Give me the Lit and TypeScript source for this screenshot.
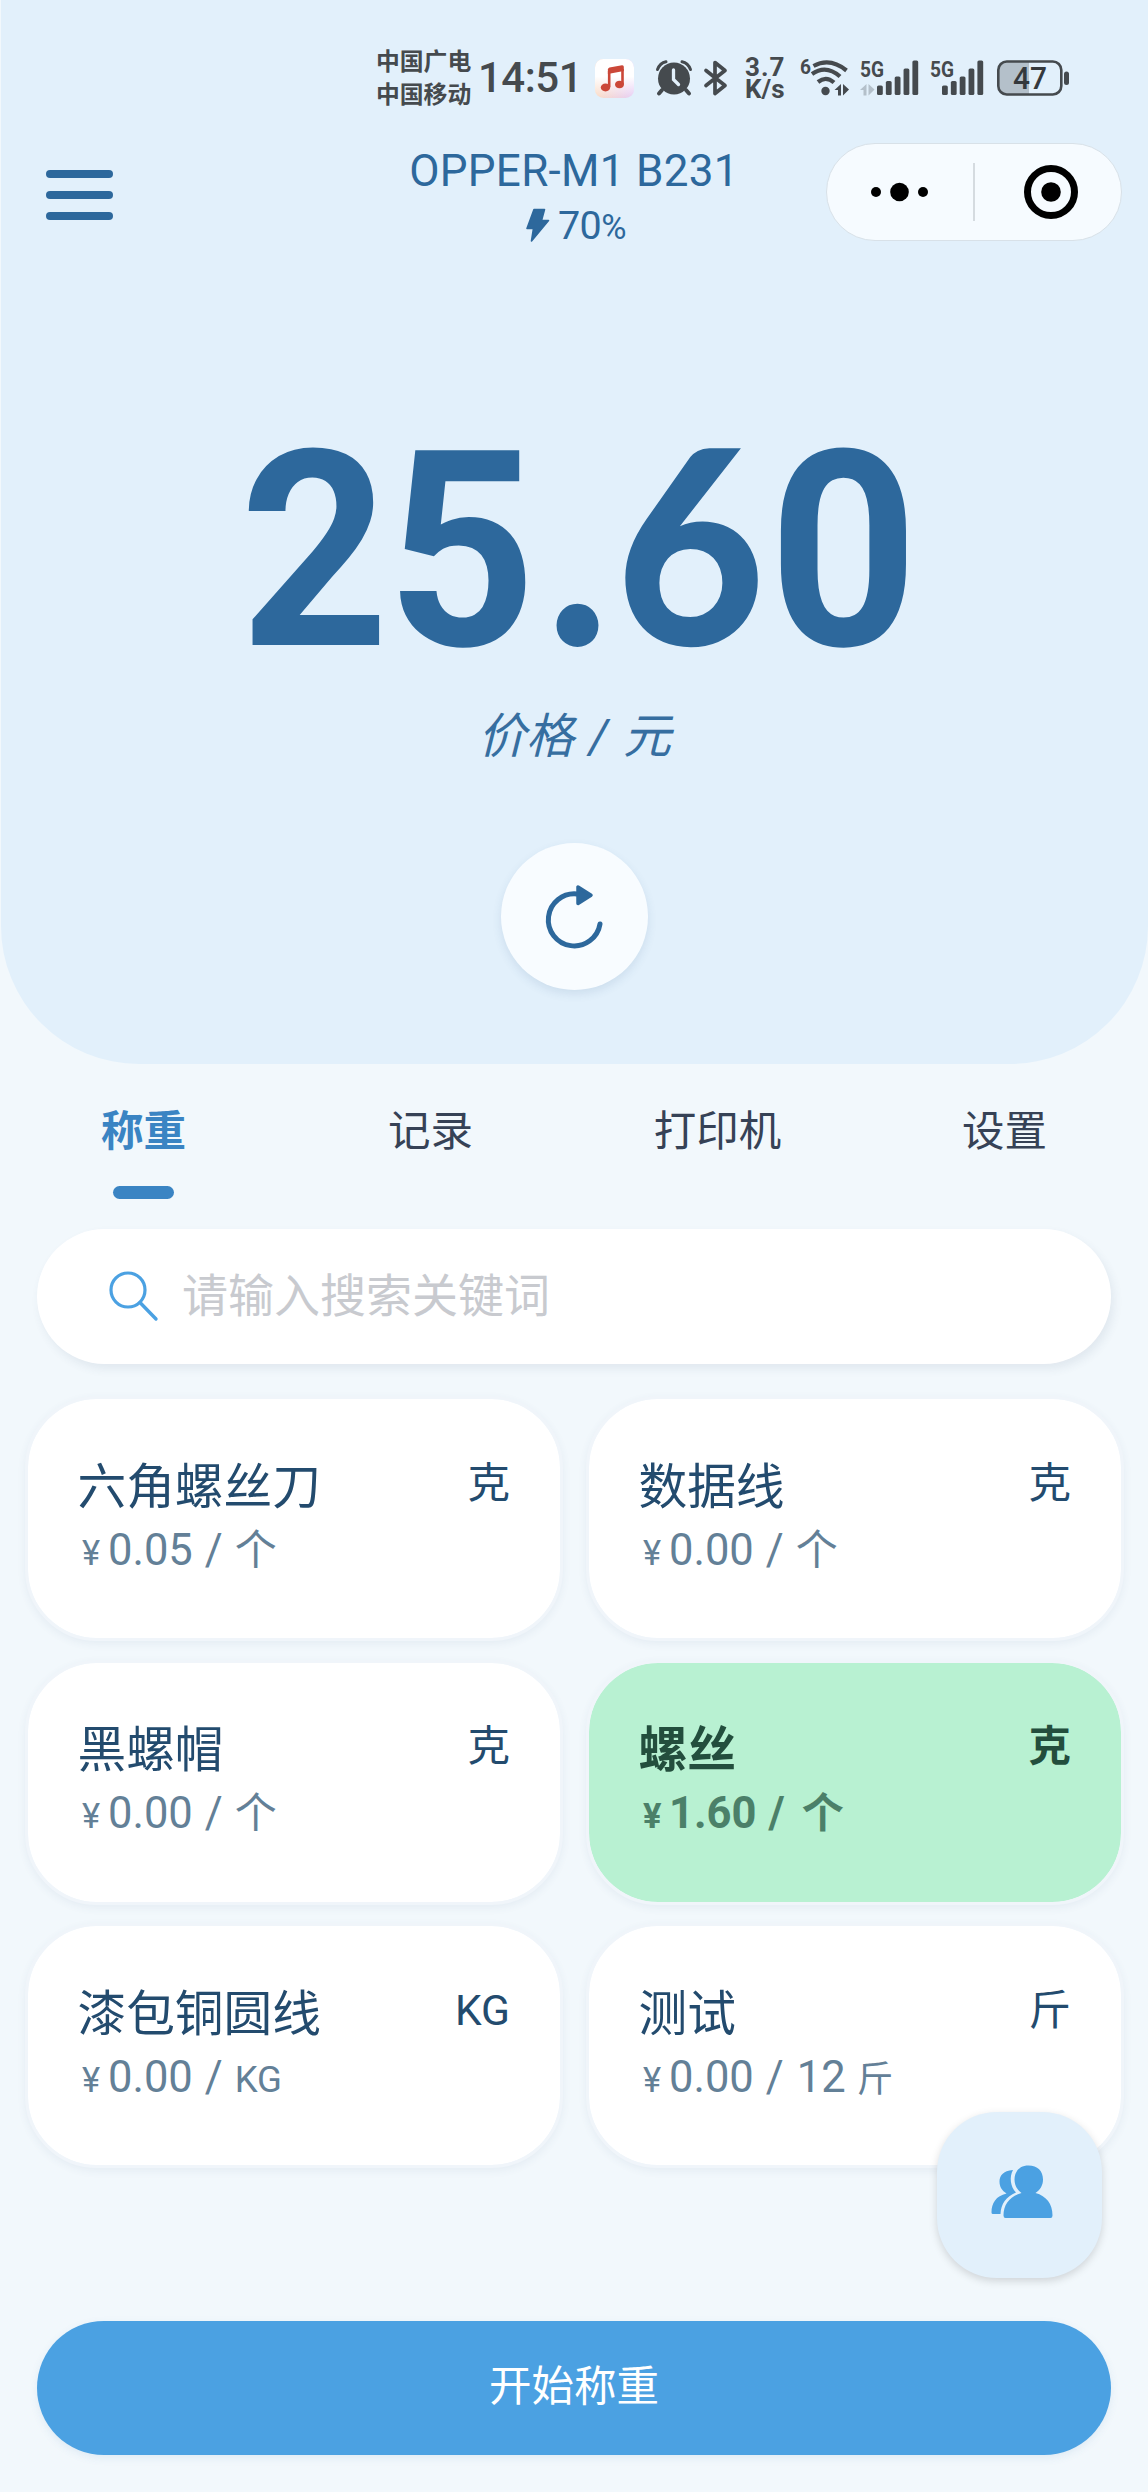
import { LitElement, html, css, svg } from "lit";
import { customElement, property, state } from "lit/decorators.js";
import { classMap } from "lit/directives/class-map.js";

interface Product {
  name: string;
  unit: string;
  price: string;
  per: string;
  count?: string;
  small?: boolean;
}

const PRODUCTS: Product[] = [
  { name: "六角螺丝刀", unit: "克", price: "0.05", per: "个" },
  { name: "数据线", unit: "克", price: "0.00", per: "个" },
  { name: "黑螺帽", unit: "克", price: "0.00", per: "个" },
  { name: "螺丝", unit: "克", price: "1.60", per: "个" },
  { name: "漆包铜圆线", unit: "KG", price: "0.00", per: "KG", small: true },
  { name: "测试", unit: "斤", price: "0.00", count: "12", per: "斤", small: true },
];

const TABS = ["称重", "记录", "打印机", "设置"];

@customElement("status-bar")
class StatusBar extends LitElement {
  static styles = css`
    :host {
      display: flex;
      height: 66px;
      padding-left: 375px;
      align-items: center;
      color: #454a4e;
      font-family: Roboto, "Noto Sans CJK SC", sans-serif;
    }
    svg {
      display: block;
      flex: none;
      overflow: visible;
    }
    .carriers {
      width: 102px;
      padding-bottom: 4px;
      font: 700 23.8px/33px "Noto Sans CJK SC", sans-serif;
      white-space: nowrap;
    }
    .time {
      width: 117px;
      font-size: 42px;
      line-height: 66px;
      font-weight: 500;
      letter-spacing: -0.5px;
      white-space: nowrap;
    }
    .music {
      margin-right: 22px;
    }
    .alarm {
      margin-right: 12px;
    }
    .bt {
      margin-right: 17px;
    }
    .speed {
      width: 55px;
      font-size: 26px;
      line-height: 22px;
      font-weight: 700;
      white-space: nowrap;
    }
    .rate {
      letter-spacing: 1px;
    }
    .wifi {
      margin-right: 11px;
    }
    .cell {
      margin-right: 10px;
    }
    .cell.last {
      margin-right: 12px;
    }
    text {
      font-family: Roboto, sans-serif;
      font-weight: 700;
    }
    .level {
      font-weight: 500;
    }
  `;

  private cell(x0: number, data: boolean, last: boolean) {
    const tops = [27.5, 23, 18.5, 10.5, 2.5];
    return html`<svg class="cell ${last ? "last" : ""}" width=${x0 + 43} height="40" viewBox="0 0 ${x0 + 43} 40">
      <text x="0" y="19" font-size="22.5" textLength="24" lengthAdjust="spacingAndGlyphs" fill="#454a4e">5G</text>
      ${data
        ? svg`<path d="M6.500 26v11.500h-3V32H0zM8.500 26v11.500l6-6z" fill="#b4c0ca"/>`
        : ""}
      ${tops.map(
        (t, i) => svg`<rect x=${x0 + i * 8.85} y=${t} width="5.8" height=${37 - t} rx="1.6" fill="#454a4e"/>`,
      )}
    </svg>`;
  }

  render() {
    return html`
      <div class="carriers"><div>中国广电</div><div>中国移动</div></div>
      <div class="time">14:51</div>
      <svg class="music" width="39" height="39" viewBox="0 0 39 39">
        <defs>
          <linearGradient id="g" x1="0" y1="1" x2="1" y2="0.9">
            <stop offset="0" stop-color="#fbdcc4" />
            <stop offset="1" stop-color="#e6cdf5" />
          </linearGradient>
          <linearGradient id="w" x1="0" y1="0" x2="0" y2="1">
            <stop offset="0.45" stop-color="#fff" />
            <stop offset="1" stop-color="#fff" stop-opacity="0" />
          </linearGradient>
        </defs>
        <rect width="39" height="39" rx="8.500" fill="url(#g)" />
        <rect width="39" height="39" rx="8.500" fill="url(#w)" />
        <path d="M27.500 10V25M14.200 12V28" fill="none" stroke="#cb4738" stroke-width="2.600" />
        <path d="M12.900 10.500Q13 9 14.500 8.500L27 6.200Q28.800 6 28.800 7.800V12L12.900 15z" fill="#cb4738" />
        <ellipse cx="10.500" cy="28.500" rx="4.700" ry="3.900" fill="#cb4738" />
        <ellipse cx="24.500" cy="25.500" rx="4.500" ry="3.800" fill="#cb4738" />
      </svg>
      <svg class="alarm" width="36" height="36" viewBox="0 0 36 36">
        <circle cx="18" cy="18.500" r="16" fill="#454a4e" />
        <path d="M1.500 9.500Q4 3 10 1.800M34.500 9.500Q32 3 26 1.800" fill="none" stroke="#454a4e" stroke-width="3" stroke-linecap="round" />
        <path d="M6 30l-3 3.500M30 30l3 3.500" stroke="#454a4e" stroke-width="4" stroke-linecap="round" />
        <path d="M17.500 10v9.500l5 5" fill="none" stroke="#e2f0fb" stroke-width="3.300" stroke-linecap="round" />
      </svg>
      <svg class="bt" width="24" height="36" viewBox="0 0 24 36">
        <path d="M2 10.500L21 25.500 11 33.500V2.500L21 10.500 2 25.500" fill="none" stroke="#454a4e" stroke-width="3.700" stroke-linejoin="round" stroke-linecap="round" />
      </svg>
      <div class="speed"><div class="rate">3.7</div><div>K/s</div></div>
      <svg class="wifi" width="49" height="40" viewBox="0 0 49 40">
        <text x="0" y="16" font-size="21" textLength="11" lengthAdjust="spacingAndGlyphs" fill="#454a4e">6</text>
        <g fill="none" stroke="#454a4e" stroke-width="4.200">
          <path d="M13.500 8Q30 -1 46.500 12.500" />
          <path d="M12 16Q26 6 40 18.500" />
          <path d="M18 24Q26 17.500 34 24.500" />
        </g>
        <circle cx="25.500" cy="33" r="4.200" fill="#454a4e" />
        <path d="M41 26v11.500h-3V32h-3.500zM43 26v11.500l6-6z" fill="#454a4e" />
      </svg>
      ${this.cell(17, true, false)} ${this.cell(12, false, true)}
      <svg width="73" height="36" viewBox="0 0 73 36">
        <path d="M9.500 1.500H32V34.500H9.500a8 8 0 0 1-8-8V9.500a8 8 0 0 1 8-8z" fill="#b4c0ca" />
        <rect x="1.300" y="1.500" width="63" height="33" rx="8.500" fill="none" stroke="#454a4e" stroke-width="2.600" />
        <rect x="67" y="11.500" width="5" height="13.500" rx="2.500" fill="#454a4e" />
        <text class="level" x="16" y="29" font-size="32" textLength="34" lengthAdjust="spacingAndGlyphs" fill="#35393d">47</text>
      </svg>
    `;
  }
}

@customElement("product-card")
class ProductCard extends LitElement {
  @property({ attribute: false }) item!: Product;
  @property({ type: Boolean, reflect: true }) selected = false;

  static styles = css`
    :host {
      display: flex;
      justify-content: space-between;
      align-items: flex-start;
      box-sizing: border-box;
      height: 245px;
      padding: 52.500px 50px 0 49.500px;
      border: 3px solid #f0f5fa;
      border-radius: 72px;
      background: #fff;
      background-clip: padding-box;
      box-shadow: 0 3px 8px rgba(60, 90, 130, 0.07);
      font-family: Roboto, "Noto Sans CJK SC", sans-serif;
      color: #234b6e;
      white-space: nowrap;
    }
    :host([selected]) {
      background-color: #b8f1d2;
      color: #234e3d;
      font-weight: 700;
    }
    .name {
      font-size: 48.700px;
      line-height: 72px;
    }
    .price {
      display: flex;
      align-items: baseline;
      height: 54px;
      line-height: 54px;
      padding-left: 4.500px;
      font-size: 43.500px;
      color: #638097;
    }
    :host([selected]) .price {
      color: #4b8069;
    }
    .yen {
      width: 26px;
      font-size: 34.500px;
    }
    .slash {
      margin: 0 12px 0 12px;
    }
    :host([selected]) .slash {
      margin-right: 17px;
    }
    .count {
      margin: 0 11px 0 1px;
    }
    .per {
      font-size: 42px;
    }
    .per.small {
      font-size: 36.500px;
    }
    .unit {
      font-size: 42.500px;
      line-height: 64px;
    }
  `;

  render() {
    const p = this.item;
    return html`
      <div>
        <div class="name">${p.name}</div>
        <div class="price">
          <span class="yen">¥</span><span>${p.price}</span><span class="slash">/</span>
          ${p.count ? html`<span class="count">${p.count}</span>` : ""}
          <span class=${classMap({ per: true, small: !!p.small })}>${p.per}</span>
        </div>
      </div>
      <div class="unit">${p.unit}</div>
    `;
  }
}

@customElement("app-root")
class AppRoot extends LitElement {
  @state() private tab = 0;
  @state() private picked = 3;

  static styles = css`
    :host {
      display: block;
      box-sizing: border-box;
      position: relative;
      height: 2492px;
      overflow: hidden;
      background: #f2f8fc;
      font-family: Roboto, "Noto Sans CJK SC", sans-serif;
      color: #2d689c;
    }
    svg {
      display: block;
    }
    .hero {
      display: flex;
      flex-direction: column;
      box-sizing: border-box;
      height: 1064px;
      margin-left: 1px;
      padding-top: 45px;
      border-radius: 0 0 138px 138px;
      background: #e2f0fb;
    }
    .nav {
      display: grid;
      grid-template-columns: 1fr auto 1fr;
      height: 98px;
      margin: 32px 26px 0 45px;
    }
    .menu {
      display: flex;
      flex-direction: column;
      gap: 12.500px;
      padding-top: 27px;
    }
    .bar {
      width: 67px;
      height: 8.400px;
      border-radius: 4px;
      background: #2d689c;
    }
    .device {
      margin-left: -20px;
      padding-top: 1px;
      text-align: center;
      white-space: nowrap;
    }
    .title {
      height: 54px;
      line-height: 54px;
      font-size: 44px;
      letter-spacing: 0.300px;
    }
    .battery {
      display: flex;
      justify-content: center;
      align-items: baseline;
      height: 54px;
      line-height: 56px;
      padding-left: 4px;
      font-size: 39.500px;
      letter-spacing: -0.500px;
    }
    .bolt {
      margin-right: 8px;
      align-self: center;
    }
    .pct {
      font-size: 34.500px;
    }
    .capsule {
      display: flex;
      justify-self: end;
      align-items: center;
      box-sizing: border-box;
      width: 296px;
      height: 98px;
      border: 1.500px solid #d8e1e8;
      border-radius: 49px;
      background: #f6fbff;
    }
    .more,
    .close {
      display: flex;
      justify-content: center;
    }
    .close {
      flex: 1;
      padding-left: 5px;
    }
    .more {
      box-sizing: border-box;
      flex: none;
      width: 148px;
      border-right: 2px solid #d5dbe0;
      height: 58px;
      align-items: center;
    }
    .value {
      margin: 140px 0 0 3px;
      height: 321px;
      line-height: 320px;
      text-align: center;
      white-space: nowrap;
      font-family: Lato, sans-serif;
      font-weight: 900;
      font-size: 271px;
    }
    .digit {
      display: inline-block;
      width: 151px;
      line-height: 1;
      text-align: center;
      font-family: Roboto, sans-serif;
      font-weight: 700;
      font-size: 274px;
      letter-spacing: -6px;
      transform: scaleX(0.95);
    }
    .digit.five {
      margin: 0 5px 0 -4px;
    }
    .digit.round {
      margin: 0 2px 0 -4px;
      font-family: Lato, sans-serif;
      font-weight: 900;
      font-size: 271px;
    }
    .digit.point {
      width: 77px;
      font-family: Lato, sans-serif;
      font-weight: 900;
      font-size: 271px;
      letter-spacing: 0;
    }
    .label {
      height: 72px;
      line-height: 70px;
      text-align: center;
      font-size: 48px;
      font-style: italic;
      word-spacing: 3px;
      opacity: 0.95;
    }
    .refresh {
      display: flex;
      align-self: center;
      align-items: center;
      justify-content: center;
      width: 147px;
      height: 147px;
      margin-top: 69px;
      border-radius: 50%;
      background: #f8fcff;
      box-shadow: 0 4px 10px rgba(50, 90, 140, 0.12);
    }
    .tabs {
      display: grid;
      grid-template-columns: repeat(4, 1fr);
      height: 165px;
    }
    .tab {
      display: flex;
      flex-direction: column;
      align-items: center;
      padding-top: 35px;
      font-size: 42.500px;
      line-height: 66px;
      color: #364256;
    }
    .tab.active {
      font-weight: 700;
      color: #3a84c3;
    }
    .tab.active::after {
      content: "";
      width: 61px;
      height: 13px;
      margin-top: 21px;
      border-radius: 6.500px;
      background: #3a84c3;
    }
    .search {
      display: flex;
      align-items: center;
      box-sizing: border-box;
      height: 135px;
      margin: 0 37px;
      padding-left: 72px;
      border-radius: 68px;
      background: #fff;
      box-shadow: 3px 5px 10px rgba(60, 80, 110, 0.09);
      font-size: 46px;
      color: #c8cacf;
    }
    .search svg {
      margin-right: 23px;
    }
    .hint {
      padding-bottom: 9px;
    }
    .grid {
      display: grid;
      grid-template-columns: 1fr 1fr;
      gap: 18.500px 23px;
      margin: 32px 24px 0 25px;
    }
    .start {
      display: flex;
      align-items: center;
      justify-content: center;
      box-sizing: border-box;
      height: 134px;
      margin: 153px 37px 0;
      padding-bottom: 12px;
      border-radius: 67px;
      background: #4ba1e2;
      box-shadow: 0 3px 8px rgba(60, 120, 180, 0.1);
      color: #fff;
      font-size: 42.500px;
    }
    .fab {
      position: absolute;
      right: 46px;
      top: 2112px;
      display: flex;
      align-items: center;
      justify-content: center;
      box-sizing: border-box;
      width: 165px;
      height: 166px;
      padding: 0 0 7px 4px;
      border-radius: 60px;
      background: #e2f0fb;
      box-shadow: 0 3px 8px rgba(0, 0, 0, 0.15);
    }
  `;

  private digit(ch: string) {
    return html`<span class=${classMap({ digit: true, five: ch === "5", round: ch === "6", point: ch === "." })}>${ch}</span>`;
  }

  render() {
    return html`
      <section class="hero">
        <status-bar></status-bar>
        <div class="nav">
          <div class="menu"><div class="bar"></div><div class="bar"></div><div class="bar"></div></div>
          <div class="device">
            <div class="title">OPPER-M1 B231</div>
            <div class="battery">
              <svg class="bolt" width="24" height="34" viewBox="0 0 24 34">
                <path d="M8 1.500H18.500L15.500 12.500H22.500L5.500 33 7.500 20.500H1z" fill="#2d689c" stroke="#2d689c" stroke-width="1.600" stroke-linejoin="round" />
              </svg>
              <span>70</span><span class="pct">%</span>
            </div>
          </div>
          <div class="capsule">
            <div class="more">
              <svg width="58" height="20" viewBox="0 0 58 20">
                <circle cx="5" cy="10" r="5" /><circle cx="28.500" cy="10" r="9.300" /><circle cx="52" cy="10" r="5" />
              </svg>
            </div>
            <div class="close">
              <svg width="54" height="54" viewBox="0 0 54 54">
                <circle cx="27" cy="27" r="23.500" fill="none" stroke="#000" stroke-width="7" />
                <circle cx="27" cy="27" r="9.800" />
              </svg>
            </div>
          </div>
        </div>
        <div class="value">${[..."25.60"].map((c) => this.digit(c))}</div>
        <div class="label">价格 / 元</div>
        <div class="refresh">
          <svg width="70" height="70" viewBox="-34 -36 70 70">
            <path d="M3 -24A26 26 0 1 0 26 6" fill="none" stroke="#2d689c" stroke-width="5" stroke-linecap="round" />
            <path d="M4 -31V-14.500L17 -22.700z" fill="#2d689c" stroke="#2d689c" stroke-width="3.500" stroke-linejoin="round" />
          </svg>
        </div>
      </section>
      <nav class="tabs">
        ${TABS.map(
          (t, i) => html`<div class=${classMap({ tab: true, active: i === this.tab })} @click=${() => (this.tab = i)}>${t}</div>`,
        )}
      </nav>
      <div class="search">
        <svg width="50" height="54" viewBox="0 0 50 54">
          <circle cx="19" cy="20" r="17" fill="none" stroke="#4ba1e2" stroke-width="3.200" />
          <path d="M31 32.500L47 49" stroke="#4ba1e2" stroke-width="3.400" stroke-linecap="round" />
        </svg>
        <span class="hint">请输入搜索关键词</span>
      </div>
      <div class="grid">
        ${PRODUCTS.map(
          (p, i) => html`<product-card .item=${p} ?selected=${i === this.picked} @click=${() => (this.picked = i)}></product-card>`,
        )}
      </div>
      <div class="start">开始称重</div>
      <div class="fab">
        <svg width="62" height="54" viewBox="0 0 62 54">
          <path d="M22 5C12 5.500 8.500 11 8.500 16.500 8.500 22 11 25.500 15.500 28.500 5 31 0.500 38 0.500 47.500Q0.500 49 2 49H9.500C10 39 15 31.500 25 27.500 19.500 22 18 12 22 5z" fill="#4ba1e2" />
          <path d="M37.500 0.500C46.500 0.500 52 6 52 14.500 52 20.500 49 25 44.500 28 55.500 31 61.500 39 61.500 50.500Q61.500 53 59.500 53H14.500Q12.500 53 12.500 50.500C12.500 39 19 31 30.500 28 26 25 23.500 20 23.500 14.500 23.500 6 29 0.500 37.500 0.500z" fill="#4ba1e2" />
        </svg>
      </div>
    `;
  }
}
